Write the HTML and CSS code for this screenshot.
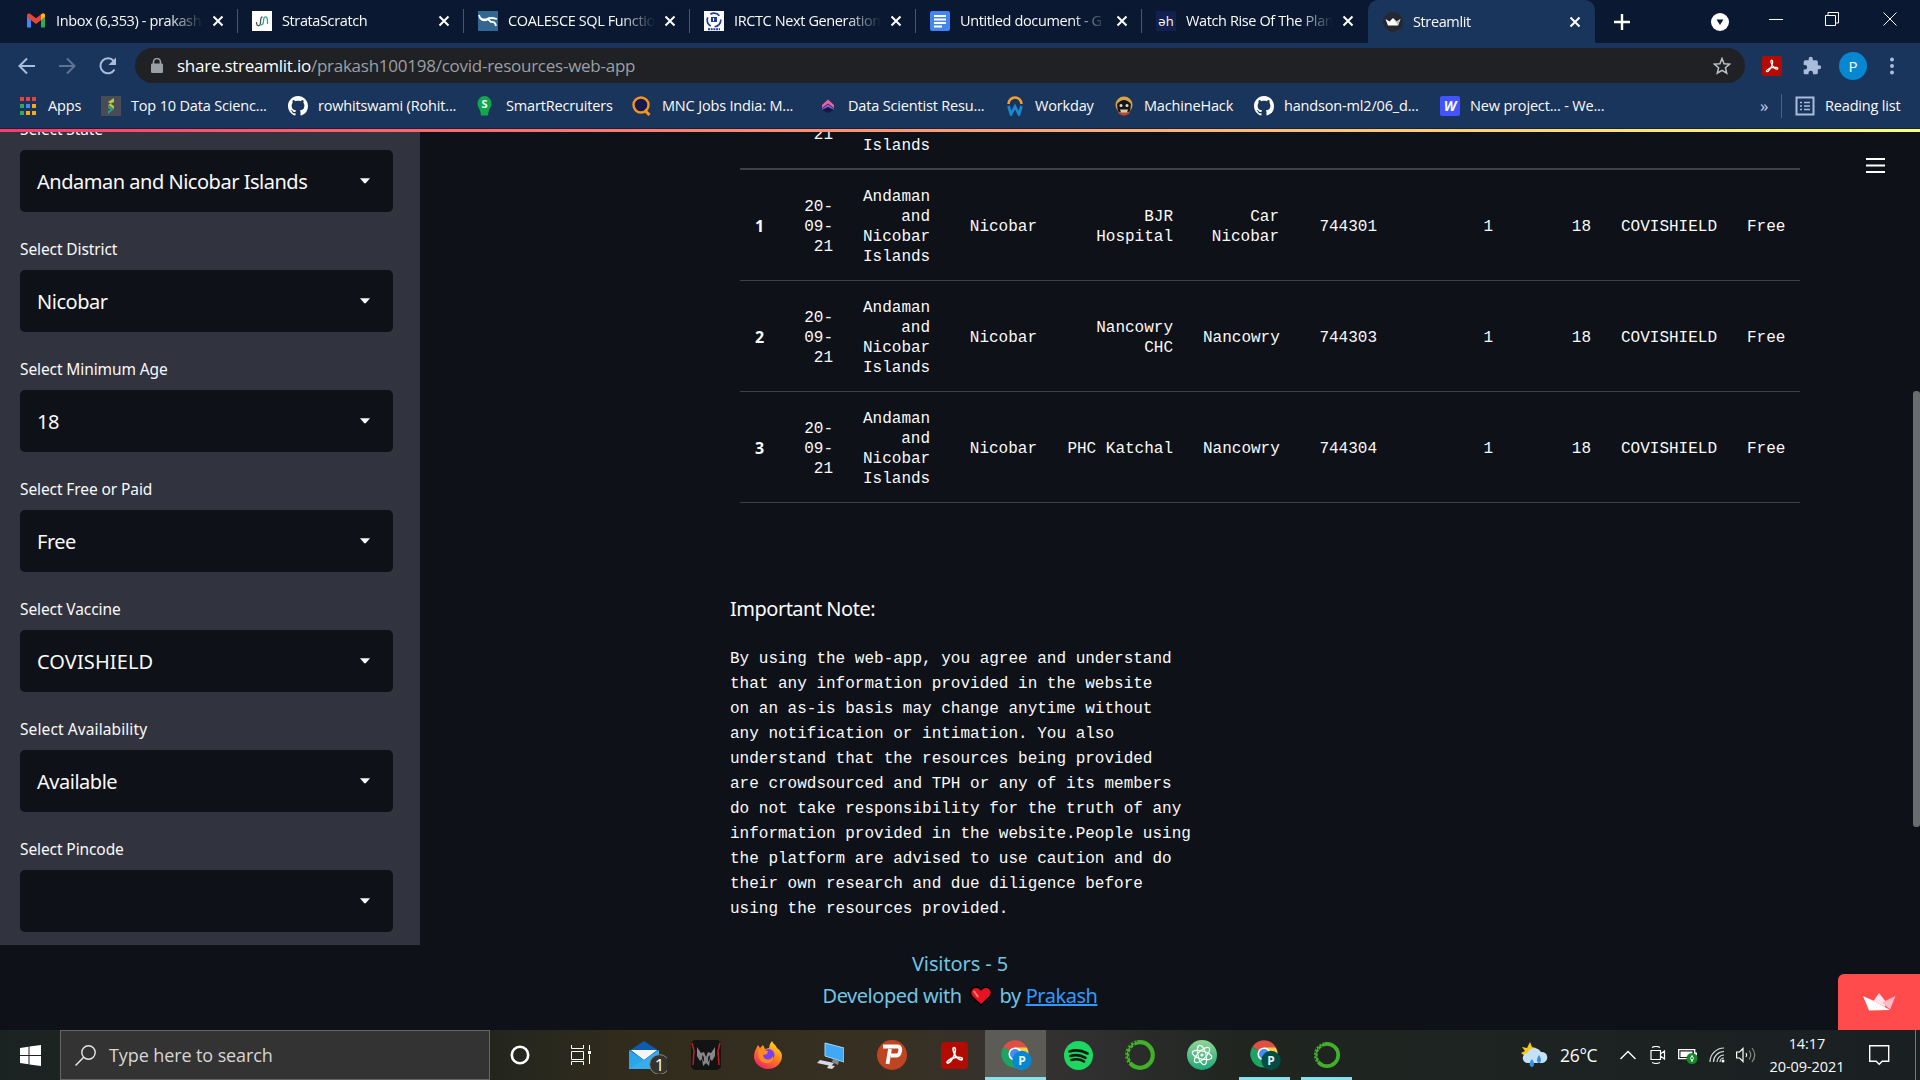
FILE: index.html
```html
<!DOCTYPE html>
<html lang="en">
<head>
<meta charset="utf-8">
<title>Streamlit</title>
<link rel="stylesheet" href="styles.css">
</head>
<body>
<svg class="defs" width="0" height="0">
  <defs>
    <symbol id="x" viewBox="0 0 12 12"><path d="M1.5 1.5l9 9M10.5 1.5l-9 9" stroke="#fff" stroke-width="2" fill="none"/></symbol>
    <symbol id="github" viewBox="0 0 16 16"><path fill="#fff" d="M8 0C3.58 0 0 3.58 0 8c0 3.54 2.29 6.53 5.47 7.59.4.07.55-.17.55-.38 0-.19-.01-.82-.01-1.49-2.01.37-2.53-.49-2.69-.94-.09-.23-.48-.94-.82-1.13-.28-.15-.68-.52-.01-.53.63-.01 1.08.58 1.23.82.72 1.21 1.87.87 2.33.66.07-.52.28-.87.51-1.07-1.78-.2-3.64-.89-3.64-3.95 0-.87.31-1.59.82-2.15-.08-.2-.36-1.02.08-2.12 0 0 .67-.21 2.2.82.64-.18 1.32-.27 2-.27s1.36.09 2 .27c1.53-1.04 2.2-.82 2.2-.82.44 1.1.16 1.92.08 2.12.51.56.82 1.27.82 2.15 0 3.07-1.87 3.75-3.65 3.95.29.25.54.73.54 1.48 0 1.07-.01 1.93-.01 2.2 0 .21.15.46.55.38A8.01 8.01 0 0 0 16 8c0-4.42-3.58-8-8-8z"/></symbol>
    <symbol id="acrobat" viewBox="0 0 20 20"><rect width="20" height="20" rx="2.500" fill="#b30b00"/><path d="M9.300 4.200c1.600-.5 1.800 2 .6 5.200C8.700 12.500 6.300 16 4.800 15.600 3.300 14.900 6.600 12.300 10 11.600c3.300-.7 6.400-.2 5.700 1.300-1 1.400-4.700-1.600-6-4.600-.8-2-.9-3.800-.4-4.100z" fill="none" stroke="#fff" stroke-width="1.200"/></symbol>
    <symbol id="caret" viewBox="0 0 10 6"><path d="M0 .3h10L5.900 5Q5 5.800 4.100 5z" fill="#fafafa"/></symbol>
    <symbol id="chrome" viewBox="0 0 32 32"><path d="M16 16L2.600 8A15.500 15.500 0 0 1 29.400 8z" fill="#dd5144"/><path d="M16 16L16 8.500h13.600A15.500 15.500 0 0 1 16 31.500z" fill="#ffcd46"/><path d="M16 16v15.500A15.500 15.500 0 0 1 2.600 8z" fill="#1da362"/><circle cx="16" cy="16" r="7.500" fill="#fff"/><circle cx="16" cy="16" r="5.700" fill="#4a8af4"/></symbol>
    <symbol id="anaconda" viewBox="0 0 32 32"><circle cx="16" cy="16" r="12.800" fill="none" stroke="#43b02a" stroke-width="4.200"/><path d="M5 25A14.500 14.500 0 0 1 13 2" fill="none" stroke="#20251f" stroke-width="1.500" stroke-dasharray="2 2"/><path d="M7 23A11.500 11.500 0 0 1 13 5" fill="none" stroke="#20251f" stroke-width="1.300" stroke-dasharray="1.500 3"/></symbol>
  </defs>
</svg>

<header class="browser">
  <div class="tabstrip">
    <div class="tab"><svg class="fav" viewBox="0 0 20 20"><path d="M1 16.500V5l4 3v8.500z" fill="#4285f4"/><path d="M15 16.500V8l4-3v11.500z" fill="#34a853"/><path d="M1 6V4.500C1 2.500 3 2 4.500 3L10 7.200 15.500 3C17 2 19 2.500 19 4.500V6l-9 7z" fill="#ea4335"/><path d="M15 9V3.400C17 2 19 2.500 19 4.500V6z" fill="#fbbc04"/></svg><span class="title">Inbox (6,353) - prakash</span><svg class="close"><use href="#x"/></svg></div>
    <div class="tab"><svg class="fav" viewBox="0 0 20 20"><rect width="20" height="20" fill="#fff"/><path d="M4.500 11c0 5 4 5 4 0 0-3 0-5 2-5" fill="none" stroke="#555" stroke-width="1.300"/><path d="M8.500 14c2 0 3-1 3-4 0-5 4-6 4 0v3" fill="none" stroke="#2fa58d" stroke-width="1.300"/></svg><span class="title">StrataScratch</span><svg class="close"><use href="#x"/></svg></div>
    <div class="tab"><svg class="fav" viewBox="0 0 20 20"><rect width="20" height="20" fill="#336791"/><path d="M1 4q1 6 8 4 3-2 10 0" fill="none" stroke="#fff" stroke-width="1.800"/><path d="M2 7q4 4 8 1l3 3q4-1 5 4" fill="none" stroke="#fff" stroke-width="1.800"/></svg><span class="title">COALESCE SQL Functio</span><svg class="close"><use href="#x"/></svg></div>
    <div class="tab"><svg class="fav" viewBox="0 0 20 20"><rect width="20" height="20" fill="#fff"/><circle cx="10" cy="9" r="6.800" fill="none" stroke="#213d96" stroke-width="1.700" stroke-dasharray="10 4"/><path d="M7 6h6v5H7z" fill="#213d96"/><path d="M9.500 7v3" stroke="#fff"/><path d="M4 18.200h12" stroke="#213d96" stroke-width="2" stroke-dasharray="2 .7"/></svg><span class="title">IRCTC Next Generation</span><svg class="close"><use href="#x"/></svg></div>
    <div class="tab"><svg class="fav" viewBox="0 0 20 20"><rect width="20" height="20" rx="2" fill="#4285f4"/><path d="M4 5h12M4 8.500h12M4 12h12M4 15.500h8" stroke="#fff" stroke-width="1.800"/></svg><span class="title">Untitled document - G</span><svg class="close"><use href="#x"/></svg></div>
    <div class="tab last"><span class="fav dh">&#601;h</span><span class="title">Watch Rise Of The Plan</span><svg class="close"><use href="#x"/></svg></div>
    <div class="tab active"><svg class="fav" viewBox="0 0 20 20"><circle cx="10" cy="10" r="10" fill="#262730"/><path d="M2.500 7l4 2.500L10 6l3.500 3.500 4-2.500-2.500 6.500H5z" fill="#fff"/><path d="M10 6l3.500 3.500 4-2.500-2.500 6z" fill="#bbb"/></svg><span class="title">Streamlit</span><svg class="close"><use href="#x"/></svg></div>
    <div class="newtab"><svg width="16" height="16"><path d="M8 0v16M0 8h16" stroke="#fff" stroke-width="2.400"/></svg></div>
    <div class="winbtns">
      <svg width="18" height="18"><circle cx="9" cy="9" r="9" fill="#fff"/><path d="M5.500 6.500h7L9 12z" fill="#0a1931"/></svg>
      <svg width="14" height="14"><path d="M0 7.500h14" stroke="#fff"/></svg>
      <svg width="14" height="14"><path d="M.5 3.500h10v10H.5zM3 3.500V.5h10.500v10.500H11" fill="none" stroke="#fff"/></svg>
      <svg width="14" height="14"><path d="M.5.5l13 13M13.500.5l-13 13" stroke="#fff"/></svg>
    </div>
  </div>

  <div class="toolbar">
    <svg class="nav" viewBox="0 0 20 20"><path d="M18 10H3M10 2.500L2.500 10l7.500 7.500" fill="none" stroke="#a9bcdc" stroke-width="2"/></svg>
    <svg class="nav" viewBox="0 0 20 20"><path d="M2 10h15M10 2.500l7.500 7.500-7.500 7.500" fill="none" stroke="#5c7396" stroke-width="2"/></svg>
    <svg class="nav" viewBox="0 0 20 20"><path d="M17.500 13.500a7.500 7.500 0 1 1-.8-8.500" fill="none" stroke="#a9bcdc" stroke-width="2"/><path d="M19 1.500v7.500h-7.500z" fill="#a9bcdc"/></svg>
    <div class="urlbar">
      <svg width="12" height="15" viewBox="0 0 12 15"><path d="M2.500 6V4a3.500 3.500 0 0 1 7 0v2" fill="none" stroke="#9aa0a6" stroke-width="1.600"/><rect y="5.500" width="12" height="9.500" rx="1.200" fill="#9aa0a6"/></svg>
      <span class="url"><b>share.streamlit.io</b>/prakash100198/covid-resources-web-app</span>
      <svg width="18" height="18" viewBox="0 0 18 18"><path d="M9 1.500l2.100 5.200 5.500.4-4.200 3.600 1.300 5.500L9 13.300l-4.700 2.900 1.300-5.500L1.400 7.100l5.500-.4z" fill="none" stroke="#bdc1c6" stroke-width="1.500"/></svg>
    </div>
    <svg class="ext" width="20" height="20"><use href="#acrobat"/></svg>
    <svg class="ext" width="20" height="20" viewBox="0 0 24 24"><path fill="#a9bcdc" d="M20.500 11H19V7a2 2 0 0 0-2-2h-4V3.500a2.500 2.500 0 0 0-5 0V5H4a2 2 0 0 0-2 2v3.800h1.500a2.700 2.700 0 0 1 0 5.400H2V20c0 1.100.9 2 2 2h3.800v-1.500a2.700 2.700 0 0 1 5.400 0V22H17a2 2 0 0 0 2-2v-4h1.500a2.500 2.500 0 0 0 0-5z"/></svg>
    <span class="avatar">P</span>
    <svg class="dots" width="4" height="18"><circle cx="2" cy="2.500" r="2" fill="#a9bcdc"/><circle cx="2" cy="9" r="2" fill="#a9bcdc"/><circle cx="2" cy="15.500" r="2" fill="#a9bcdc"/></svg>
  </div>

  <div class="bookmarks">
    <div class="bm"><svg viewBox="0 0 20 20"><path d="M2 1h4v4H2zM8 1h4v4H8zM14 1h4v4h-4z" fill="#ea4335"/><path d="M2 8h4v4H2zM2 15h4v4H2z" fill="#34a853"/><path d="M8 8h4v4H8z" fill="#4285f4"/><path d="M14 8h4v4h-4zM8 15h4v4H8zM14 15h4v4h-4z" fill="#fbab12"/></svg><span>Apps</span></div>
    <div class="bm"><svg viewBox="0 0 20 20"><rect width="20" height="20" fill="#4b4b57"/><path d="M13 2l-6 4v3l6-3zM7 6l6 4v3L7 9z" fill="#b7c93c"/><path d="M7 10l6 3-6 5v-3l3-1-3-2z" fill="#2f9e84"/></svg><span>Top 10 Data Scienc...</span></div>
    <div class="bm"><svg><use href="#github"/></svg><span>rowhitswami (Rohit...</span></div>
    <div class="bm smart"><svg viewBox="0 0 20 20"><path d="M8.500 0a7 7.500 0 0 1 7 7.500c0 4-3 5-3.500 12H5C4.500 12.500 1.500 11.500 1.500 7.500A7 7.500 0 0 1 8.500 0z" fill="#11a84c"/><text x="8.500" y="12" text-anchor="middle" class="s-letter">S</text></svg><span>SmartRecruiters</span></div>
    <div class="bm"><svg viewBox="0 0 20 20"><circle cx="9" cy="9" r="7.500" fill="#15194d" stroke="#f7941d" stroke-width="2.400"/><path d="M12.500 14l5 5" stroke="#f7941d" stroke-width="3"/></svg><span>MNC Jobs India: M...</span></div>
    <div class="bm"><svg viewBox="0 0 20 20"><path d="M4 9l6-5.500L16 9v3l-6-4.500L4 12z" fill="#f0609e"/><path d="M4 13l6-4.500 6 4.500v1l-6-3-6 3z" fill="#8b5cf0"/><path d="M4 14l6-3 6 3-6 3z" fill="#15183f"/></svg><span>Data Scientist Resu...</span></div>
    <div class="bm"><svg viewBox="0 0 20 20"><path d="M3.500 8a6.500 6.500 0 0 1 13 0" fill="none" stroke="#f6a02d" stroke-width="2.500"/><path d="M3.500 10L6 18.500l4-8 4 8L16.500 10" fill="none" stroke="#1c88cf" stroke-width="2.700"/></svg><span>Workday</span></div>
    <div class="bm"><svg viewBox="0 0 20 20"><circle cx="10" cy="9" r="8.500" fill="#d9a441"/><path d="M3 8q7-8 14 0l-1 9-6 3-6-3z" fill="#171717"/><path d="M2 12l3 6 5 2 5-2 3-6-3 4H5z" fill="#b5482e"/><circle cx="7" cy="9.500" r="1.500" fill="#ddd"/><circle cx="13" cy="9.500" r="1.500" fill="#ddd"/><path d="M6 13.500h8l-1 3H7z" fill="#d5cba8"/></svg><span>MachineHack</span></div>
    <div class="bm"><svg><use href="#github"/></svg><span>handson-ml2/06_d...</span></div>
    <div class="bm"><i class="w-icon">W</i><span>New project... - We...</span></div>
    <div class="more">»</div>
    <div class="bm reading"><svg viewBox="0 0 20 20"><rect x="1.500" y="1.500" width="17" height="17" fill="none" stroke="#a9bcdc" stroke-width="2"/><path d="M5 6.500h2M5 10h2M5 13.500h2M9 6.500h6M9 10h6M9 13.500h6" stroke="#a9bcdc" stroke-width="1.500"/></svg><span>Reading list</span></div>
  </div>
</header>

<div class="page">
  <aside class="sidebar">
    <label>Select State</label>
    <div class="select"><span>Andaman and Nicobar Islands</span><svg><use href="#caret"/></svg></div>
    <label>Select District</label>
    <div class="select"><span>Nicobar</span><svg><use href="#caret"/></svg></div>
    <label>Select Minimum Age</label>
    <div class="select"><span>18</span><svg><use href="#caret"/></svg></div>
    <label>Select Free or Paid</label>
    <div class="select"><span>Free</span><svg><use href="#caret"/></svg></div>
    <label>Select Vaccine</label>
    <div class="select"><span class="caps">COVISHIELD</span><svg><use href="#caret"/></svg></div>
    <label class="wide">Select Availability</label>
    <div class="select"><span>Available</span><svg><use href="#caret"/></svg></div>
    <label>Select Pincode</label>
    <div class="select"><span></span><svg><use href="#caret"/></svg></div>
  </aside>

  <main class="content">
    <table class="slots">
      <colgroup><col class="c-idx"><col class="c-date"><col class="c-state"><col class="c-dist"><col class="c-hosp"><col class="c-block"><col class="c-pin"><col class="c-dose"><col class="c-age"><col class="c-vac"><col class="c-fee"></colgroup>
      <tbody>
        <tr class="first"><th></th><td>21</td><td class="low">Islands</td><td></td><td></td><td></td><td></td><td></td><td></td><td></td><td></td></tr>
        <tr><th>1</th><td>20-<br>09-<br>21</td><td>Andaman<br>and<br>Nicobar<br>Islands</td><td>Nicobar</td><td>BJR<br>Hospital</td><td>Car<br>Nicobar</td><td>744301</td><td>1</td><td>18</td><td>COVISHIELD</td><td>Free</td></tr>
        <tr><th>2</th><td>20-<br>09-<br>21</td><td>Andaman<br>and<br>Nicobar<br>Islands</td><td>Nicobar</td><td>Nancowry<br>CHC</td><td>Nancowry</td><td>744303</td><td>1</td><td>18</td><td>COVISHIELD</td><td>Free</td></tr>
        <tr><th>3</th><td>20-<br>09-<br>21</td><td>Andaman<br>and<br>Nicobar<br>Islands</td><td>Nicobar</td><td>PHC Katchal</td><td>Nancowry</td><td>744304</td><td>1</td><td>18</td><td>COVISHIELD</td><td>Free</td></tr>
      </tbody>
    </table>
    <h4 class="note-title">Important Note:</h4>
<pre class="note">By using the web-app, you agree and understand
that any information provided in the website
on an as-is basis may change anytime without
any notification or intimation. You also
understand that the resources being provided
are crowdsourced and TPH or any of its members
do not take responsibility for the truth of any
information provided in the website.People using
the platform are advised to use caution and do
their own research and due diligence before
using the resources provided.</pre>
  </main>

  <footer class="credit">
    <p class="visitors">Visitors - 5</p>
    <p><span>Developed with</span><svg width="22" height="20" viewBox="0 0 22 20"><path d="M11 19L2 10.500C-1 7 1.200 1.200 6 1.200c2.200 0 3.800 1 5 2.600 1.200-1.600 2.800-2.600 5-2.600 4.800 0 7 5.800 4 9.300z" fill="#e81224" stroke="#000" stroke-width="1.500"/><path d="M4.200 5.500l3.600 5" stroke="#f47c64" stroke-width="2" stroke-linecap="round"/></svg><span class="by">by</span><a>Prakash</a></p>
  </footer>
  <svg class="menu" width="19" height="17"><path d="M0 2h19M0 8.500h19M0 15h19" stroke="#fff" stroke-width="2"/></svg>
  <div class="thumb"></div>
  <div class="badge"><svg width="33" height="18" viewBox="0 0 33 18"><path d="M0 3l11 5 16 9-21 .5z" fill="#fff"/><path d="M10.500 8L16 0l7 9-1 5z" fill="#ffe3e9"/><path d="M19 9.500L32.500 3 27 16.500z" fill="#ffb9c8"/></svg></div>
</div>

<nav class="taskbar">
  <div class="start"><svg width="21" height="21" viewBox="0 0 21 21"><path d="M0 3l8.500-1.200V10H0zM9.500 1.600L21 0v10H9.500zM0 11h8.500v8.200L0 18zM9.500 11H21v10L9.500 19.400z" fill="#fff"/></svg></div>
  <div class="search"><svg width="21" height="21" viewBox="0 0 21 21"><circle cx="13.500" cy="7.500" r="6.700" fill="none" stroke="#e6e6e6" stroke-width="1.400"/><path d="M8.700 12.300L.5 20.500" stroke="#e6e6e6" stroke-width="1.500"/></svg><span>Type here to search</span></div>
  <div class="apps">
    <div><svg width="20" height="20"><circle cx="10" cy="10" r="8.200" fill="none" stroke="#fff" stroke-width="2.600"/></svg></div>
    <div><svg class="tv" width="20" height="20"><path d="M.5 0v3.500h12V0M.5 6.500h12v8H.500zM.500 20v-3.500h12V20M18.500 0v5M18.500 9.500V19" fill="none" stroke="#fff"/><path d="M17 6h3v3h-3z" fill="#fff"/></svg></div>
    <div><svg width="46" height="38" viewBox="0 0 46 38"><path d="M8 15L23 5l15 10v7H8z" fill="#0c5cb0"/><path d="M10 14h26L23 24z" fill="#fff"/><path d="M8 14l15 10 15-10v19H8z" fill="#2ba5ea"/><path d="M38 14v19H8z" fill="#45b5f0" opacity=".5"/><path d="M10 14h26L23 22z" fill="#f5f5f5"/><circle cx="38.500" cy="28.500" r="9.900" fill="#34342f" stroke="#8b8b86"/><text x="38.500" y="34.500" text-anchor="middle" class="badge-num">1</text></svg></div>
    <div><svg width="30" height="30" viewBox="0 0 30 30"><path d="M3 0h24l3 3v24l-3 3H3l-3-3V3z" fill="#131313"/><path d="M1 3l2 8-1 14M29 3l-2 8 1 14" stroke="#c11d25" stroke-width="1.500" fill="none"/><path d="M6 7l4 6 3-1 2 5 2-5 3 1 4-6v9l-3 5-2-2-1 7-3-3-3 3-1-7-2 2-3-5z" fill="#85858a"/><path d="M11 15l2 2v5l-2-3zM19 15l-2 2v5l2-3z" fill="#202022"/></svg></div>
    <div><svg width="28" height="28" viewBox="0 0 28 28"><defs><linearGradient id="ff" x1=".8" y1="0" x2=".2" y2="1"><stop offset="0" stop-color="#ffe226"/><stop offset=".5" stop-color="#ff7a1f"/><stop offset="1" stop-color="#ef1d6c"/></linearGradient></defs><path d="M4 4l2 3 3-3 2 4 4-1 1-4 2-3c1 3 4 4 5 7 3 2 5 5 5 8a14 13 0 0 1-28 0C0 11 2 8 4 4z" fill="url(#ff)"/><circle cx="14.500" cy="14" r="6" fill="#7b3ff0"/><path d="M5 8l9 2-1 3-4 1 1 3c4 3 8 1 9-2 1 5-3 8-8 7-6-1-8-8-6-14z" fill="#ff8a28"/></svg></div>
    <div><svg width="28" height="28" viewBox="0 0 28 28"><path d="M9 2l19 5v14L9 15z" fill="#3fa9f5" stroke="#a5d8f8"/><path d="M17 18l6 2-1 4-6-3z" fill="#888"/><path d="M4 19l14 3-3 3-14-3zM13 24l6 1-3 3-5-1z" fill="#d5dbe2"/></svg></div>
    <div><svg width="30" height="30"><circle cx="15" cy="15" r="15" fill="#bf4422"/><path d="M10.500 24L13 9M6 6.500h15c4 0 2 9-1 9h-6" fill="none" stroke="#fff" stroke-width="3.800"/></svg></div>
    <div><svg width="27" height="27"><use href="#acrobat"/></svg></div>
    <div class="on"><svg width="36" height="34" viewBox="0 0 36 34"><svg width="28" height="28" x="3" y="2"><use href="#chrome"/></svg><circle cx="24" cy="22.500" r="9.700" fill="#0687d2"/><text x="24" y="27" text-anchor="middle" class="p-num">P</text></svg></div>
    <div><svg width="29" height="29" viewBox="0 0 29 29"><circle cx="14.500" cy="14.500" r="14.500" fill="#1ed760"/><path d="M5.500 10.500q9-3 18 2M6.500 15q8-2.500 15 1.800M7.500 19q7-2 12.500 1.500" fill="none" stroke="#10180f" stroke-width="2.600" stroke-linecap="round"/></svg></div>
    <div><svg width="32" height="32"><use href="#anaconda"/></svg></div>
    <div><svg width="30" height="30" viewBox="0 0 30 30"><defs><linearGradient id="at" x1="0" y1="0" x2="0" y2="1"><stop offset="0" stop-color="#8fd694"/><stop offset="1" stop-color="#20a878"/></linearGradient></defs><circle cx="15" cy="15" r="15" fill="url(#at)"/><g fill="none" stroke="#fff" stroke-width="1.200"><ellipse cx="15" cy="15" rx="4" ry="10" transform="rotate(-15 15 15)"/><ellipse cx="15" cy="15" rx="4" ry="10" transform="rotate(45 15 15)"/><ellipse cx="15" cy="15" rx="4" ry="10" transform="rotate(105 15 15)"/></g><circle cx="15" cy="15" r="1.600" fill="#fff"/></svg></div>
    <div class="run"><svg width="36" height="34" viewBox="0 0 36 34"><svg width="28" height="28" x="3" y="2"><use href="#chrome"/></svg><circle cx="24" cy="22.500" r="9.700" fill="#004d45"/><text x="24" y="27" text-anchor="middle" class="p-num">P</text></svg></div>
    <div class="run"><svg width="28" height="28" viewBox="0 0 32 32"><use href="#anaconda"/></svg></div>
  </div>
  <div class="tray">
    <svg width="28" height="28" viewBox="0 0 28 28"><path d="M10 1l2 5 4 1-2 6-9 2-4-3 4-2-3-4 5 1z" fill="#f6c915"/><path d="M8 22a5 5 0 0 1-.5-10 7.500 7.500 0 0 1 13.500-1 5.500 5.500 0 0 1 1.500 11z" fill="#c4e1f8"/><path d="M12 18c-5 6-1 8 0 8s4-2 0-8zM19 14c-4 6-1 8 0 8s4-2 0-8z" fill="#3a8ee0"/></svg>
    <span class="temp">26°C</span>
    <svg width="16" height="10"><path d="M.5 9L8 1.500 15.500 9" fill="none" stroke="#fff" stroke-width="1.400"/></svg>
    <svg width="16" height="18"><path d="M1 4.500h9.500v9H1zM10.500 8l4-3v8l-4-3M2 1.500Q6-.5 10 1.500M2 16.500q4 2 8 0" fill="none" stroke="#fff" stroke-width="1.200"/></svg>
    <svg width="20" height="18" viewBox="0 0 20 18"><path d="M.7 3.700h16v9H.7z" fill="none" stroke="#fff" stroke-width="1.300"/><path d="M2.500 5.500h12v5.500h-12zM17 6.500h2v3h-2z" fill="#fff"/><circle cx="14" cy="12.500" r="5.500" fill="#128a25"/><path d="M14 9.500q3 3 0 5.500-3-2.500 0-5.500zM14 13v3" fill="none" stroke="#fff"/></svg>
    <svg width="16" height="16"><g fill="none" stroke="#ddd" stroke-width="1.200"><path d="M1 15A14 14 0 0 1 15 1"/><path d="M4.500 15A10.500 10.500 0 0 1 15 4.500" /><path d="M8 15a7 7 0 0 1 7-7M11 15a4 4 0 0 1 4-4"/></g><circle cx="14" cy="14" r="1.500" fill="#fff"/></svg>
    <svg width="20" height="18"><path d="M.6 6h3L7 2.500v13L3.600 12h-3z" fill="none" stroke="#fff" stroke-width="1.200"/><path d="M10 7q1.500 2 0 4" fill="none" stroke="#fff" stroke-width="1.200"/><path d="M13 4.500q3.500 4.500 0 9M16 2q5.500 7 0 14" fill="none" stroke="#8a8a8a" stroke-width="1.200"/></svg>
    <div class="clock">14:17<br>20-09-2021</div>
    <svg class="notif" width="21" height="21"><path d="M.7.700h19v15.500h-6.500l-3 3-3-3H.700z" fill="none" stroke="#fff" stroke-width="1.400"/></svg>
    <i class="peek"></i>
  </div>
</nav>
</body>
</html>
```
FILE: styles.css
```css
* { box-sizing: border-box; }
html, body { margin: 0; padding: 0; }
body {
  width: 1920px; height: 1080px; overflow: hidden;
  display: flex; flex-direction: column;
  background: #0e1117; color: #fafafa;
  font-family: "Open Sans", "Noto Sans", sans-serif;
}
svg { display: block; flex: none; }
.defs { position: absolute; }

/* browser chrome */
.browser { flex: none; height: 132px; background: #1a355c; display: flex; flex-direction: column; border-bottom: 3px solid; border-image: linear-gradient(90deg, #ff3b6b, #ffff80) 1; }
.tabstrip { flex: none; height: 43px; background: #0a1931; display: flex; padding-left: 13px; align-items: stretch; }
.tab { width: 226px; height: 24px; margin-top: 9px; padding: 0 13px 0 13px; display: flex; align-items: center; border-right: 1px solid #4a566b; }
.tab + .tab { padding-left: 14px; }
.tab.last { border-right-color: transparent; }
.tab.active { width: 227px; height: 43px; margin-top: 0; padding: 0 14px 0 15px; border: 0; border-radius: 10px 10px 0 0; background: #1a355c; }
.fav { width: 20px; height: 20px; margin-right: 10px; }
.dh { background: #12204d; font-size: 13px; line-height: 20px; text-align: center; flex: none; }
.title { width: 148px; flex: none; overflow: hidden; white-space: nowrap; font-size: 14.500px; letter-spacing: -.38px; line-height: 22px; -webkit-mask-image: linear-gradient(90deg, #000 112px, transparent 147px); mask-image: linear-gradient(90deg, #000 112px, transparent 147px); }
.close { width: 12px; height: 12px; margin-left: 8px; }
.newtab { width: 56px; display: flex; align-items: center; justify-content: center; }
.winbtns { display: grid; grid-template-columns: 56px 56px 56px 60px; margin-left: 43px; height: 37px; place-items: center; }
.winbtns svg:first-child { margin-top: 7px; }
.toolbar { flex: none; height: 45px; display: flex; align-items: center; padding-left: 17px; }
.nav { width: 20px; height: 20px; margin-right: 20px; }
.nav + .nav + .nav { margin-right: 18px; }
.urlbar { width: 1610px; height: 35px; border-radius: 18px; background: #202124; display: flex; align-items: center; padding: 0 14px 0 16px; }
.url { flex: 1; margin-left: 14px; font-size: 17px; letter-spacing: -.25px; color: #9aa0a6; white-space: nowrap; }
.url b { font-weight: 400; color: #fff; }
.ext { margin-left: 17px; }
.ext + .ext { margin-left: 20px; }
.avatar { width: 28px; height: 28px; margin: 0 23px 0 17px; border-radius: 50%; background: #0687d2; color: #fff; font-size: 15px; line-height: 28px; text-align: center; }
.bookmarks { flex: none; height: 41px; padding: 0 0 5px 18px; display: grid; grid-template-columns: 83px 187px 188px 156px 186px 187px 109px 140px 186px 308px 33px 139px; align-items: center; border-bottom: 1px solid #10233f; }
.bm { display: flex; align-items: center; font-size: 14.500px; letter-spacing: -.17px; white-space: nowrap; }
.bm svg { width: 20px; height: 20px; margin-right: 10px; }
.s-letter { font: bold 11px "Open Sans", sans-serif; fill: #fff; }
.w-icon { width: 20px; height: 20px; margin-right: 10px; border-radius: 2px; background: #4353ff; font: italic bold 14px/20px "Open Sans", sans-serif; text-align: center; }
.more { color: #c3d0e6; font-size: 17px; line-height: 20px; padding-left: 12px; }
.reading { padding-left: 13px; border-left: 1px solid #49618a; height: 24px; }
.reading svg { margin-right: 10px; }

/* app */
.page { flex: 1; position: relative; display: flex; align-items: flex-start; overflow: hidden; }
.sidebar { width: 420px; height: 813px; background: #31333f; padding: 0 20px; overflow: hidden; }
.sidebar label { display: block; height: 22px; margin: 26px 0 10px; font: 15.500px/22px "Noto Sans", sans-serif; letter-spacing: -.1px; white-space: nowrap; }
.sidebar label:first-child { margin-top: -14px; }
.sidebar label.wide { letter-spacing: .1px; }
.select { width: 373px; height: 62px; border-radius: 5px; background: #0e1117; display: flex; align-items: center; justify-content: space-between; padding: 0 23px 0 17px; font: 20px "Noto Sans", sans-serif; letter-spacing: -.48px; }
.select .caps { letter-spacing: .1px; }
.select svg { width: 10px; height: 6px; }
.content { width: 1070px; margin-left: 310px; }
.slots { width: 1060px; margin: -8px 0 0 10px; table-layout: fixed; border-collapse: separate; border-spacing: 0; font: 16px/20px "Liberation Mono", monospace; }
.slots td, .slots th { height: 111px; padding: 16px 15px 14px; border-bottom: 1px solid #3f4146; text-align: right; vertical-align: middle; white-space: nowrap; }
.slots td { padding: 17px 15px 13px; }
.slots th { text-align: left; font: bold 16px/20px "Noto Sans", sans-serif; }
.slots .first td, .slots .first th { height: 46px; padding-top: 1px; padding-bottom: 0; border-bottom-width: 2px; vertical-align: top; }
.slots .first .low { padding-top: 12px; }
.c-idx { width: 49px; } .c-date { width: 59px; } .c-state { width: 97px; } .c-dist { width: 107px; }
.c-hosp { width: 136px; } .c-block { width: 106px; } .c-pin { width: 98px; } .c-dose { width: 116px; }
.c-age { width: 98px; } .c-vac { width: 126px; } .c-fee { width: 68px; }
.note-title { margin: 91px 0 0; font: 20px/30px "Noto Sans", sans-serif; letter-spacing: -.5px; }
.note { margin: 23px 0 0; font: 16px/25px "Liberation Mono", monospace; }
.credit { position: absolute; left: 0; right: 0; top: 816px; text-align: center; color: #73c3e3; font: 20px/32px "Noto Sans", sans-serif; letter-spacing: -.48px; }
.credit p { margin: 0; display: flex; justify-content: center; align-items: center; }
.credit .visitors { letter-spacing: -.1px; }
.credit svg { margin: 0 8px; }
.credit a { margin-left: 5px; color: #2e9aff; text-decoration: underline; }
.menu { position: absolute; left: 1866px; top: 25px; }
.thumb { position: absolute; left: 1913px; top: 259px; width: 7px; height: 436px; border-radius: 3px; background: #6b6c70; }
.badge { position: absolute; right: 0; bottom: 0; width: 82px; height: 56px; border-radius: 6px 0 0 0; background: #ff4b4b; display: flex; align-items: center; justify-content: center; }

/* taskbar */
.taskbar { flex: none; height: 50px; display: flex; background: linear-gradient(90deg, #1b2322 0, #22251d 480px, #322c1d 640px, #373023 900px, #363330 1030px, #303030 1080px, #202520 1240px, #1d2321 1500px, #1a1f22 1920px); }
.start { flex: none; width: 60px; display: flex; align-items: center; justify-content: center; }
.search { flex: none; width: 430px; border: 1px solid #666; background: #333; display: flex; align-items: center; padding-left: 14px; font-size: 18px; letter-spacing: -.1px; color: #d6d6d6; }
.search span { margin-left: 13px; }
.apps { flex: none; margin-left: -1px; display: grid; grid-template-columns: repeat(14, 62px); }
.apps > div { display: flex; align-items: center; justify-content: center; }
.tv { margin-right: 2px; }
.apps .on { width: 61px; background: #5d5b55; box-shadow: inset 0 -3px #86e1ee; }
.apps .run { width: 51px; margin-left: 6px; box-shadow: inset 0 -3px #86e1ee; }
.badge-num { font: 17px "Open Sans", sans-serif; fill: #fff; }
.p-num { font: bold 12px "Open Sans", sans-serif; fill: #e6f5ff; }
.tray { flex: none; margin-left: 163px; display: grid; grid-template-columns: 40px 60px 30px 28px 31px 27px 32px 78px 44px 26px; align-items: center; }
.temp { font-size: 17.500px; letter-spacing: -.3px; }
.tray svg { justify-self: start; }
.clock { font-size: 14.500px; line-height: 23px; letter-spacing: -.05px; text-align: center; white-space: nowrap; }
.tray .notif { justify-self: end; }
.peek { width: 1px; height: 50px; background: #777; justify-self: end; }
```
